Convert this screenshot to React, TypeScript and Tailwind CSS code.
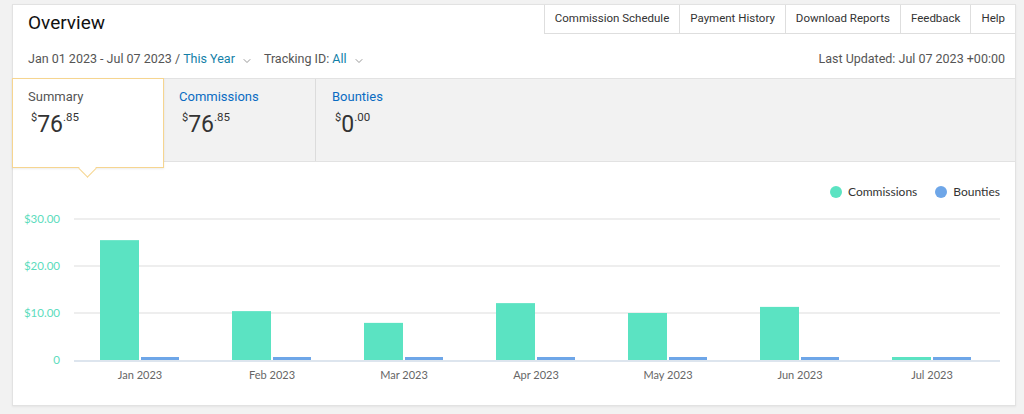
import { ChevronDown } from 'lucide-react';

const months = [
  { label: 'Jan 2023', commissions: 25.5, bounties: 0 },
  { label: 'Feb 2023', commissions: 10.4, bounties: 0 },
  { label: 'Mar 2023', commissions: 7.9, bounties: 0 },
  { label: 'Apr 2023', commissions: 12.1, bounties: 0 },
  { label: 'May 2023', commissions: 10.0, bounties: 0 },
  { label: 'Jun 2023', commissions: 11.3, bounties: 0 },
  { label: 'Jul 2023', commissions: 0, bounties: 0 },
];

const links = ['Commission Schedule', 'Payment History', 'Download Reports', 'Feedback', 'Help'];

// chart geometry, in svg pixels
const BASE = 152;
const PER_DOLLAR = 4.7;
const barH = (v: number) => Math.max(3, v * PER_DOLLAR);

function Amount({ whole, cents }: { whole: string; cents: string }) {
  return (
    <div className="flex items-start text-[#333] mt-[4px] pl-[3px]">
      <span className="text-[11px] leading-none mt-[1px]">$</span>
      <span className="text-[23px] leading-none mt-[2px]">{whole}</span>
      <span className="text-[11.5px] leading-none mt-[1px]">.{cents}</span>
    </div>
  );
}

function Chart() {
  return (
    <svg width="1002" height="180" viewBox="0 0 1002 180" className="block" style={{ fontFamily: 'Lato, sans-serif' }}>
      {[30, 20, 10].map((v) => {
        const y = BASE - v * PER_DOLLAR;
        return (
          <g key={v}>
            <line x1="61" x2="987" y1={y} y2={y} stroke="#e8e8e8" strokeWidth="1.5" />
            <text x="47" y={y + 4} textAnchor="end" fontSize="11.5" fill="#5cdcbd">${v}.00</text>
          </g>
        );
      })}
      <text x="47" y={BASE + 4} textAnchor="end" fontSize="11.5" fill="#5cdcbd">0</text>
      {months.map((m, i) => {
        const cx = 127 + 132 * i;
        const hc = barH(m.commissions);
        const hb = barH(m.bounties);
        return (
          <g key={m.label}>
            <rect x={cx - 40} y={BASE - hc} width="39" height={hc} fill="#5be3c2" />
            <rect x={cx + 1} y={BASE - hb} width="38" height={hb} fill="#6ea6e8" />
            <text x={cx} y={BASE + 19} textAnchor="middle" fontSize="11" fill="#666">{m.label}</text>
          </g>
        );
      })}
      <line x1="61" x2="987" y1={BASE + 1} y2={BASE + 1} stroke="#dde5ee" strokeWidth="2" />
    </svg>
  );
}

export default function App() {
  return (
    <div className="w-[1024px] h-[414px] bg-[#f2f2f2] pt-1 pl-3 pr-2 font-['Roboto',sans-serif]">
      <div className="w-[1004px] h-[402px] bg-white border border-[#e2e2e2] shadow-[0_1px_2px_rgba(0,0,0,0.06)] flex flex-col">
        <div className="flex justify-between h-[29px]">
          <h1 className="pl-[15px] pt-[8px] text-[19px] leading-none text-[#111]">Overview</h1>
          <nav className="flex h-[29px] border-l border-b border-[#dedede]">
            {links.map((l, i) => (
              <span
                key={l}
                className={`px-[10px] flex items-center text-[11.5px] text-[#333] ${i ? 'border-l border-[#dedede]' : ''}`}
              >
                {l}
              </span>
            ))}
          </nav>
        </div>

        <div className="flex justify-between items-center h-[44px] pt-[6px] pl-[15px] pr-[10px] text-[12.5px] text-[#555]">
          <div className="flex items-center">
            <span>Jan 01 2023 - Jul 07 2023 /&nbsp;</span>
            <span className="text-[#137fa8]">This Year</span>
            <ChevronDown className="w-3 h-3 ml-1.5 mt-[3px] text-[#777]" strokeWidth={1.5} />
            <span className="ml-[11px]">Tracking ID:&nbsp;</span>
            <span className="text-[#137fa8]">All</span>
            <ChevronDown className="w-3 h-3 ml-1.5 mt-[3px] text-[#777]" strokeWidth={1.5} />
          </div>
          <span>Last Updated: Jul 07 2023 +00:00</span>
        </div>

        <div className="relative h-[84px] flex bg-[#f2f2f2] border-t border-b border-[#e2e2e2]">
          <div className="relative z-10 -ml-px -mt-px w-[152px] h-[90px] bg-white border border-[#f6d590] shadow-[0_1px_2px_rgba(0,0,0,0.08)] pl-[15px] pt-[8px]">
            <div className="text-[13px] text-[#555]">Summary</div>
            <Amount whole="76" cents="85" />
            <div className="absolute left-[68px] -bottom-[8px] w-[13px] h-[13px] bg-white border-r border-b border-[#f6d590] rotate-45" />
          </div>
          <div className="w-[152px] pl-[15px] pt-[8px] border-r border-[#dcdcdc]">
            <div className="text-[13px] text-[#0a6cc2]">Commissions</div>
            <Amount whole="76" cents="85" />
          </div>
          <div className="pl-[16px] pt-[8px]">
            <div className="text-[13px] text-[#0a6cc2]">Bounties</div>
            <Amount whole="0" cents="00" />
          </div>
        </div>

        <div className="flex justify-end items-center gap-[6px] pr-[15px] pt-[21px] text-[12px] text-[#333] font-['Lato',sans-serif]">
          <span className="w-[12px] h-[12px] rounded-full bg-[#5be3c2]" />
          <span className="mr-[12px]">Commissions</span>
          <span className="w-[12px] h-[12px] rounded-full bg-[#6ea6e8]" />
          <span>Bounties</span>
        </div>

        <div className="mt-[7px]">
          <Chart />
        </div>
      </div>
    </div>
  );
}
